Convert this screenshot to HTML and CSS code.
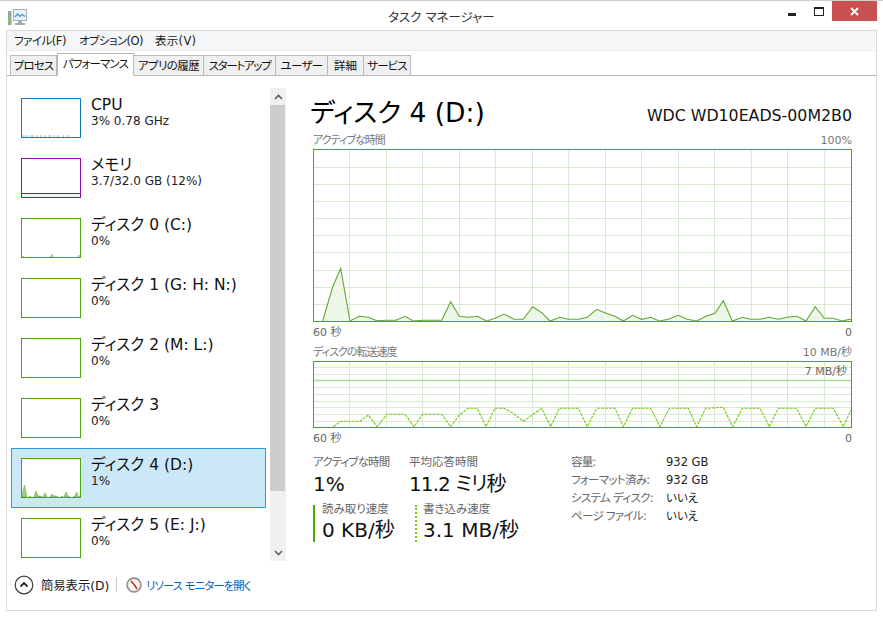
FILE: index.html
```html
<!DOCTYPE html>
<html lang="ja">
<head>
<meta charset="utf-8">
<title>タスク マネージャー</title>
<link rel="stylesheet" href="styles.css">
</head>
<body>
<div class="window">
  <header class="titlebar">
    <svg class="app-icon" width="20" height="17" viewBox="0 0 20 17"><rect x="0" y="2" width="3.500" height="14" fill="#9aa6a6"/><rect x="0" y="10" width="3.500" height="4" fill="#8cc06c"/><rect x="5.500" y=".5" width="13" height="11" fill="#e6f1fa" stroke="#a4aeb4"/><path d="M7 8l2.500-3 2.500 2.500 2-2 3 2" fill="none" stroke="#3a96d8" stroke-width="1.200"/><path d="M10 12h4v2h3v2H7v-2h3z" fill="#a4aeb2"/></svg>
    <div class="title">タスク マネージャー</div>
    <div class="winbtns">
      <span class="min"></span>
      <span class="max"></span>
      <span class="close"><svg width="9" height="9" viewBox="0 0 9 9"><path d="M1 1l7 7M8 1l-7 7" stroke="#fff" stroke-width="1.800"/></svg></span>
    </div>
  </header>
  <div class="frame">
    <nav class="menu"><span class="m1">ファイル(F)</span><span class="m2">オプション(O)</span><span class="m3">表示(V)</span></nav>
    <div class="tabs">
      <span class="tab t1">プロセス</span>
      <span class="tab active t2">パフォーマンス</span>
      <span class="tab t3">アプリの履歴</span>
      <span class="tab t4">スタートアップ</span>
      <span class="tab t5">ユーザー</span>
      <span class="tab t6">詳細</span>
      <span class="tab t7">サービス</span>
    </div>
    <div class="main">
      <aside class="side">
        <div class="list">
          <div class="row">
            <svg class="thumb" width="60" height="40" viewBox="0 0 60 40"><path d="M1 38h3M5 38h2M9 38h4M15 38h2M19 38h2M23 38h2M27 38h3M32 38h2M36 38h2M41 38h2M45 38h3" stroke="#8cc3e6" fill="none"/><rect x=".5" y=".5" width="59" height="39" fill="none" stroke="#117dbb"/></svg>
            <div class="txt"><div class="nm">CPU</div><div class="sub">3% 0.78 GHz</div></div>
          </div>
          <div class="row">
            <svg class="thumb" width="60" height="40" viewBox="0 0 60 40"><rect x=".5" y="35.500" width="59" height="4" fill="#f4f2f4" stroke="#8b12ae"/><rect x=".5" y=".5" width="59" height="39" fill="none" stroke="#8b12ae"/></svg>
            <div class="txt"><div class="nm">メモリ</div><div class="sub">3.7/32.0 GB (12%)</div></div>
          </div>
          <div class="row">
            <svg class="thumb" width="60" height="40" viewBox="0 0 60 40"><path d="M2 39v-1l1 1M29 39l2-3 1 3M57 39l1-2 1 2" fill="#a5cf8d" stroke="#9ac97f" stroke-width=".7"/><rect x=".5" y=".5" width="59" height="39" fill="none" stroke="#4da60c"/></svg>
            <div class="txt"><div class="nm">ディスク 0 (C:)</div><div class="sub">0%</div></div>
          </div>
          <div class="row">
            <svg class="thumb" width="60" height="40" viewBox="0 0 60 40"><rect x=".5" y=".5" width="59" height="39" fill="none" stroke="#4da60c"/></svg>
            <div class="txt"><div class="nm">ディスク 1 (G: H: N:)</div><div class="sub">0%</div></div>
          </div>
          <div class="row">
            <svg class="thumb" width="60" height="40" viewBox="0 0 60 40"><rect x=".5" y=".5" width="59" height="39" fill="none" stroke="#4da60c"/></svg>
            <div class="txt"><div class="nm">ディスク 2 (M: L:)</div><div class="sub">0%</div></div>
          </div>
          <div class="row">
            <svg class="thumb" width="60" height="40" viewBox="0 0 60 40"><rect x=".5" y=".5" width="59" height="39" fill="none" stroke="#4da60c"/></svg>
            <div class="txt"><div class="nm">ディスク 3</div><div class="sub">0%</div></div>
          </div>
          <div class="row selected">
            <svg class="thumb" width="60" height="40" viewBox="0 0 60 40"><path d="M1 39l1-6 1.500-6 1.500 8 1 4zM8 39l1-1 1 1zM13 39l2-6 2 5 3 0 1 1zM22 39l2-4 2 4zM29 39l2-3 2 2 3 0 1 1zM40 39l1-1 1 1zM43 39l2-5 2 4 2 1zM52 39l2-1 1.500-4 1.500 4 2 1z" fill="#9bcc7e" stroke="#6bb238" stroke-width=".6"/><rect x=".5" y=".5" width="59" height="39" fill="none" stroke="#4da60c"/></svg>
            <div class="txt"><div class="nm">ディスク 4 (D:)</div><div class="sub">1%</div></div>
          </div>
          <div class="row">
            <svg class="thumb" width="60" height="40" viewBox="0 0 60 40"><rect x=".5" y=".5" width="59" height="39" fill="none" stroke="#4da60c"/></svg>
            <div class="txt"><div class="nm">ディスク 5 (E: J:)</div><div class="sub">0%</div></div>
          </div>
        </div>
        <div class="scroll">
          <div class="sbtn"><svg width="9" height="6" viewBox="0 0 9 6"><path d="M1 5l3.500-3.500L8 5" fill="none" stroke="#606060" stroke-width="1.600"/></svg></div>
          <div class="sthumb"></div>
          <div class="strack"></div>
          <div class="sbtn"><svg width="9" height="6" viewBox="0 0 9 6"><path d="M1 1l3.500 3.500L8 1" fill="none" stroke="#606060" stroke-width="1.600"/></svg></div>
        </div>
      </aside>
      <section class="panel">
        <div class="head"><h1>ディスク 4 (D:)</h1><div class="model">WDC WD10EADS-00M2B0</div></div>
        <div class="cap"><span class="jp">アクティブな時間</span><span>100%</span></div>
        <svg class="graph g1" width="539" height="173" viewBox="313 149 539 173">
          <path class="grid" d="M349.500 150V321M386.500 150V321M422.500 150V321M459.500 150V321M495.500 150V321M532.500 150V321M568.500 150V321M605.500 150V321M641.500 150V321M678.500 150V321M714.500 150V321M751.500 150V321M787.500 150V321M824.500 150V321M314 167.500H851M314 184.500H851M314 201.500H851M314 218.500H851M314 235.500H851M314 252.500H851M314 270.500H851M314 287.500H851M314 304.500H851"/>
          <polygon class="area" points="322.700,321 332.700,286.700 340.700,268.300 350,321 359.300,316.300 368.300,317.300 376.700,320.700 386.700,320.300 396,320.300 405,316.300 413.300,321 423.300,320.300 441.700,320.300 450.700,301.700 459.300,316.300 468.300,317.300 477.300,316.300 486.700,321 495,318.300 504,314 514,319.300 523.300,319.300 532.700,306.700 541.700,312.700 550,321 560,317.300 568.300,319.300 578.300,319.300 587.300,317.300 596.700,309.300 606,313.300 615,316.300 623.300,321 632.700,315.300 641.700,319.300 650.700,317.300 659.300,321 668.300,319.300 678.300,315.300 687.300,319.300 696.700,321 706,316.300 715,313.300 723.300,300.700 732.300,321 742.300,317.300 750.700,319.300 760,319.300 769.300,317.300 778.300,319.300 787.300,317.300 796.700,316.300 806,321 815.300,306.700 824.300,318.300 833.300,318.300 841.700,321 850,319.300 851,319.300 851,321"/>
          <polyline class="line" points="322.700,321 332.700,286.700 340.700,268.300 350,321 359.300,316.300 368.300,317.300 376.700,320.700 386.700,320.300 396,320.300 405,316.300 413.300,321 423.300,320.300 441.700,320.300 450.700,301.700 459.300,316.300 468.300,317.300 477.300,316.300 486.700,321 495,318.300 504,314 514,319.300 523.300,319.300 532.700,306.700 541.700,312.700 550,321 560,317.300 568.300,319.300 578.300,319.300 587.300,317.300 596.700,309.300 606,313.300 615,316.300 623.300,321 632.700,315.300 641.700,319.300 650.700,317.300 659.300,321 668.300,319.300 678.300,315.300 687.300,319.300 696.700,321 706,316.300 715,313.300 723.300,300.700 732.300,321 742.300,317.300 750.700,319.300 760,319.300 769.300,317.300 778.300,319.300 787.300,317.300 796.700,316.300 806,321 815.300,306.700 824.300,318.300 833.300,318.300 841.700,321 850,319.300 851,319.300"/>
          <rect class="bd" x="313.500" y="149.500" width="538" height="172"/>
        </svg>
        <div class="cap cap-b"><span>60 秒</span><span>0</span></div>
        <div class="cap"><span class="jp">ディスクの転送速度</span><span>10 MB/秒</span></div>
        <div class="graph-wrap">
          <svg class="graph g2" width="539" height="67" viewBox="313 361 539 67">
            <path class="grid" d="M349.500 362V427M386.500 362V427M422.500 362V427M459.500 362V427M495.500 362V427M532.500 362V427M568.500 362V427M605.500 362V427M641.500 362V427M678.500 362V427M714.500 362V427M751.500 362V427M787.500 362V427M824.500 362V427M314 367.500H851M314 374.500H851M314 387.500H851M314 394.500H851M314 401.500H851M314 407.500H851M314 414.500H851M314 421.500H851"/>
            <path class="limit" d="M314 380.500H851"/>
            <polyline class="dash" points="333.300,426.700 340.700,421.300 360,421.300 368.300,415 377.300,426.700 386.700,414.300 405,414.300 414,426.700 422.700,414.300 441.700,414.300 450.700,426.700 459.300,415 468.300,408.300 477.300,408.300 486,426.700 495,408.300 504,408.300 513.300,413.300 523.300,421.300 541.700,408.300 550.700,426.700 559.300,408.300 578.300,408.300 587.300,426.700 596.700,408.300 615,408.300 623.300,426.700 632.700,408.300 650.700,408.300 660,426.700 669.300,408.300 688.300,408.300 696.700,426.700 705.700,408.300 723.300,407.300 732.700,426.700 742.300,408.300 760,408.300 769.300,426.700 778.300,408.300 796.700,408.300 806,426.700 815.300,408.300 833.300,408.300 843.300,426.700 851,410"/>
            <rect class="bd" x="313.500" y="361.500" width="538" height="66"/>
          </svg>
          <span class="limit-label">7 MB/秒</span>
        </div>
        <div class="cap cap-b"><span>60 秒</span><span>0</span></div>
        <div class="stats">
          <div class="stats-left">
            <div class="stat-row r1">
              <div class="stat s1"><div class="lb tight">アクティブな時間</div><div class="val">1%</div></div>
              <div class="stat"><div class="lb">平均応答時間</div><div class="val v-tight">11.2 ミリ秒</div></div>
            </div>
            <div class="stat-row r2">
              <div class="stat s2 read"><div class="lb">読み取り速度</div><div class="val">0 KB/秒</div></div>
              <div class="stat write"><div class="lb">書き込み速度</div><div class="val">3.1 MB/秒</div></div>
            </div>
          </div>
          <dl class="props">
            <dt>容量:</dt><dd>932 GB</dd>
            <dt>フォーマット済み:</dt><dd>932 GB</dd>
            <dt>システム ディスク:</dt><dd>いいえ</dd>
            <dt>ページ ファイル:</dt><dd>いいえ</dd>
          </dl>
        </div>
      </section>
    </div>
    <footer class="foot">
      <svg class="chev" width="20" height="20" viewBox="0 0 20 20"><circle cx="10" cy="10" r="8.800" fill="#fff" stroke="#3c3c3c" stroke-width="1.200"/><path d="M6.500 11.500L10 8l3.500 3.500" fill="none" stroke="#222" stroke-width="1.800"/></svg>
      <span class="less">簡易表示(D)</span>
      <span class="sep"></span>
      <svg class="mon" width="16" height="16" viewBox="0 0 16 16"><circle cx="8" cy="8" r="7" fill="#e8e4da" stroke="#8a8a84" stroke-width="1.400"/><circle cx="8" cy="8" r="4.800" fill="#fbfaf5"/><path d="M5 4l3.500 4 2.500 4" fill="none" stroke="#c82a20" stroke-width="1.500"/></svg>
      <span class="link">リソース モニターを開く</span>
    </footer>
  </div>
</div>
</body>
</html>
```
FILE: styles.css
```css
* { box-sizing: border-box; }
html, body { margin: 0; padding: 0; background: #fff; }
body { font-family: "DejaVu Sans", "Noto Sans CJK JP", sans-serif; font-feature-settings: "palt"; color: #000; }
.window { width: 883px; height: 617px; border-top: 1px solid #cfcfcf; display: flex; flex-direction: column; overflow: hidden; }

.titlebar { height: 29px; flex: none; position: relative; display: flex; align-items: flex-start; }
.app-icon { margin: 8px 0 0 8px; }
.title { position: absolute; left: 388px; top: 8px; font-size: 12.500px; line-height: 18px; color: #333; white-space: nowrap; }
.winbtns { margin-left: auto; margin-right: 6px; display: flex; align-items: flex-start; }
.winbtns span { display: block; }
.min { width: 8px; height: 3px; background: #222; margin: 12px 18px 0 0; }
.max { width: 10px; height: 9px; border: 1px solid #222; border-top-width: 2px; margin: 6px 8px 0 0; }
.close { width: 45px; height: 20px; background: #c75050; display: flex !important; align-items: center; justify-content: center; }

.frame { flex: 1; margin: 0 6px 6px; border: 1px solid #d9d9d9; display: flex; flex-direction: column; min-height: 0; }
.menu { height: 20px; flex: none; background: #f5f6f7; border-bottom: 1px solid #ececec; padding-left: 7px; display: flex; font-size: 11.500px; line-height: 20px; color: #1a1a1a; }
.m1 { width: 65px; letter-spacing: -.5px; }
.m2 { width: 76px; letter-spacing: -.6px; }
.m3 { letter-spacing: .3px; }

.tabs { height: 25px; flex: none; display: flex; align-items: flex-end; padding-left: 3px; border-bottom: 1px solid #b4b4b4; }
.tab { height: 21px; margin-bottom: -1px; background: #f0f0f0; border: 1px solid #b9b9b9; border-left-width: 0; font-size: 11.500px; line-height: 21px; text-align: center; color: #111; white-space: nowrap; letter-spacing: -.9px; }
.tab.active { height: 23px; background: #fff; border-bottom-color: #fff; border-left-width: 1px; position: relative; }
.t1 { width: 47px; border-left-width: 1px; }
.t2 { width: 77px; }
.t3 { width: 70px; letter-spacing: -.6px; }
.t4 { width: 72px; letter-spacing: -1.300px; }
.t5 { width: 52px; letter-spacing: -.6px; }
.t6 { width: 36px; letter-spacing: 0; }
.t7 { width: 47px; }

.main { flex: 1; display: flex; min-height: 0; padding-top: 12px; }
.side { display: flex; flex: none; height: 473px; padding-left: 4px; }
.list { width: 255px; height: 473px; overflow: hidden; }
.row { height: 60px; display: flex; padding: 10px 0 0 10px; border: 1px solid transparent; }
.row.selected { background: #cbe8f6; border-color: #26a0da; }
.row .thumb { margin: -1px 0 0 -1px; flex: none; }
.row.selected .thumb { background: #fff; }
.txt { margin-left: 10px; margin-top: -4px; }
.nm { font-size: 15.500px; line-height: 20px; color: #111; white-space: nowrap; }
.sub { font-size: 12px; line-height: 14px; margin-top: -1px; color: #222; white-space: nowrap; }

.scroll { width: 16px; margin-left: 4px; display: flex; flex-direction: column; background: #f0f0f0; }
.sbtn { height: 17px; display: flex; align-items: center; justify-content: center; flex: none; }
.sthumb { height: 386px; width: 15px; background: #cdcdcd; flex: none; }
.strack { flex: 1; }

.panel { width: 539px; margin-left: 27px; flex: none; }
.head { display: flex; justify-content: space-between; align-items: flex-end; height: 44px; margin-left: -3px; }
.head h1 { margin: 0; padding-top: 6px; font-weight: 400; font-size: 26.500px; line-height: 38px; color: #000; white-space: nowrap; }
.model { font-size: 15.800px; line-height: 22px; margin-bottom: 5px; color: #111; white-space: nowrap; }
.cap { display: flex; justify-content: space-between; font-size: 11px; line-height: 17px; color: #777; }
.jp { letter-spacing: -1px; }
.cap-b { color: #666; height: 22px; line-height: 21px; }
.graph { display: block; }
.grid { stroke: #d9ead3; stroke-width: 1; fill: none; }
.bd { fill: none; stroke: #4da60c; stroke-width: 1; }
.area { fill: #edf6e8; stroke: none; }
.line { fill: none; stroke: #60a830; stroke-width: 1.100; }
.limit { stroke: #a6dd98; stroke-width: 1.300; fill: none; }
.dash { fill: none; stroke: #76c81c; stroke-width: 1.100; stroke-dasharray: 3 1; }
.graph-wrap { position: relative; }
.limit-label { position: absolute; right: 5px; top: 3px; font-size: 11px; line-height: 16px; color: #666; }

.stats { display: flex; margin-top: 4px; }
.stats-left { width: 258px; flex: none; }
.stat-row { display: flex; }
.r1 { height: 44px; }
.r2 { margin-top: 7px; }
.s1 { width: 96px; }
.s2 { width: 102px; }
.lb { font-size: 11.500px; line-height: 16px; margin-bottom: 2px; color: #666; white-space: nowrap; }
.tight { letter-spacing: -.9px; }
.val { font-size: 20px; line-height: 25px; color: #111; white-space: nowrap; }
.v-tight { letter-spacing: -.9px; }
.read, .write { height: 37px; }
.read .lb, .write .lb { line-height: 8px; margin-bottom: 5px; }
.read { border-left: 2px solid #4da60c; padding-left: 7px; }
.write { padding-left: 6px; border-left: 2px dotted #76c81c; }

.props { margin: -1px 0 0; display: grid; grid-template-columns: 95px auto; grid-auto-rows: 18px; align-content: start; font-size: 11.500px; line-height: 18px; }
.props dt { color: #666; white-space: nowrap; letter-spacing: -.7px; }
.props dd { margin: 0; color: #222; }

.foot { height: 49px; flex: none; display: flex; align-items: center; padding: 0 0 2px 7px; }
.less { margin-left: 7px; font-size: 12.300px; color: #1a1a1a; width: 69px; white-space: nowrap; }
.sep { width: 1px; height: 15px; background: #c8c8c8; margin-left: 6px; }
.mon { margin-left: 9px; }
.link { margin-left: 4px; font-size: 11.500px; color: #0066cc; white-space: nowrap; letter-spacing: -1px; }
```
